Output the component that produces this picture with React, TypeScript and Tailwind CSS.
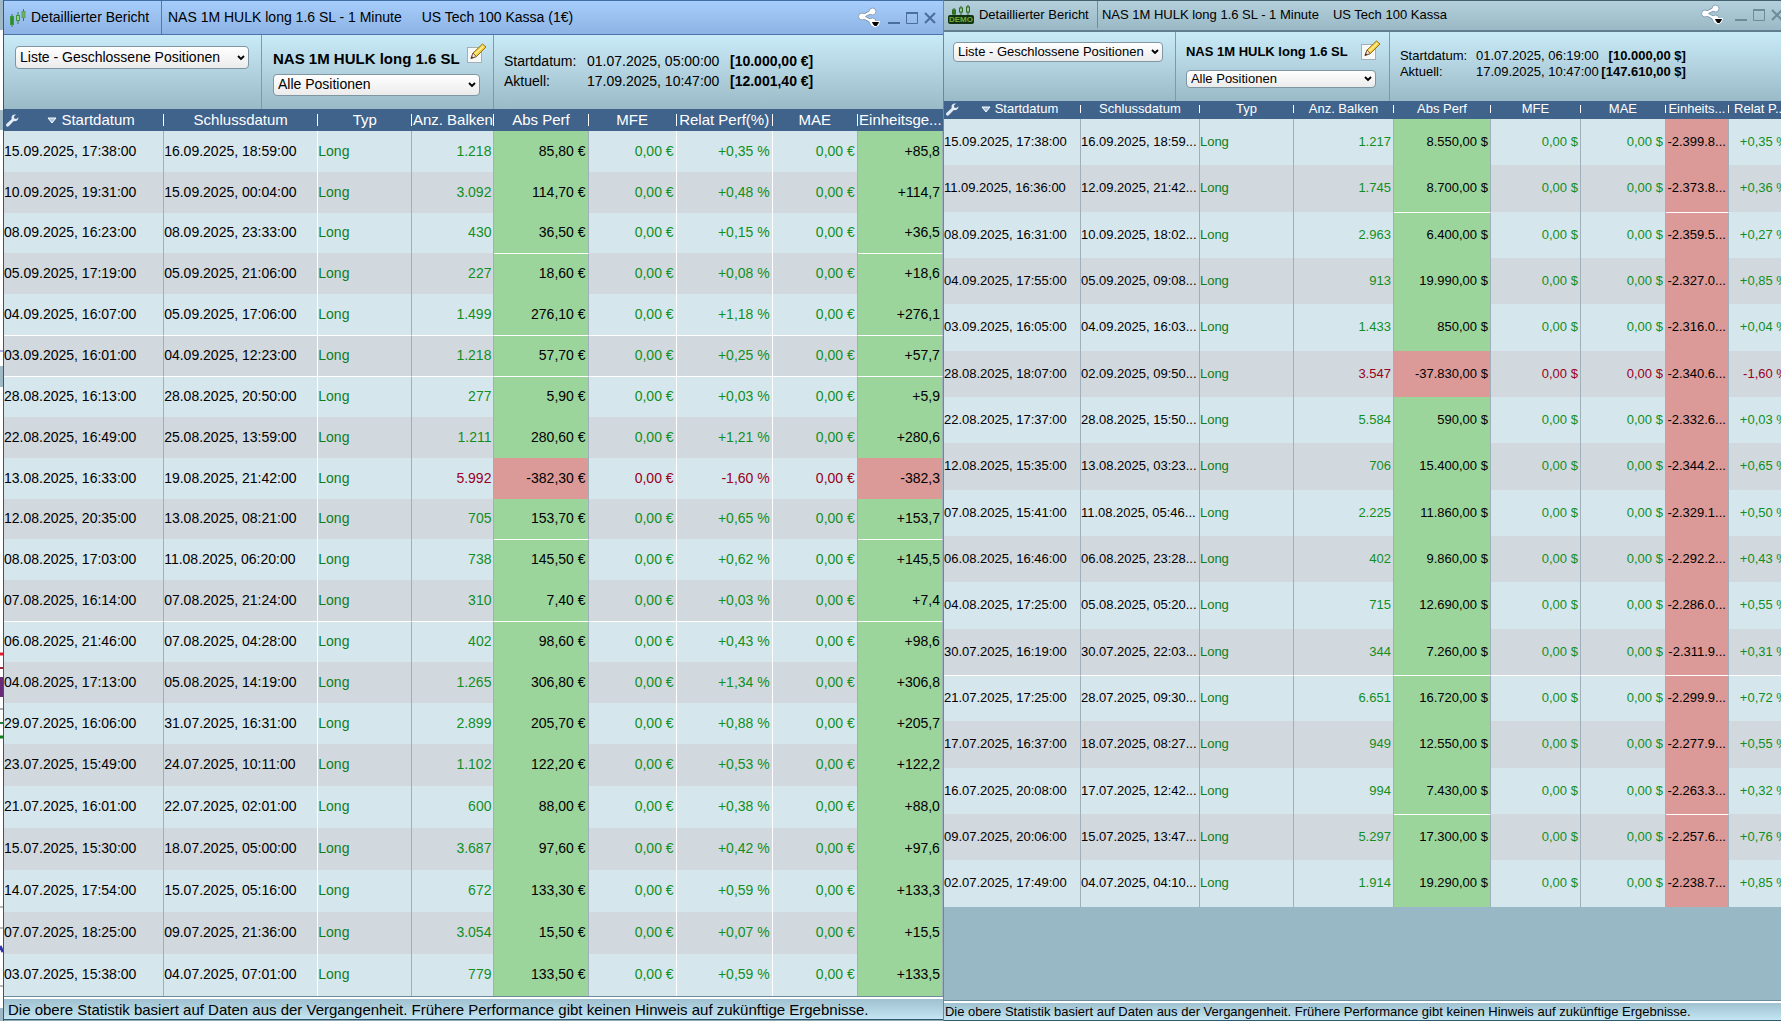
import { ReactNode } from "react";
import clsx from "clsx";

type Row = string[];

const leftRows: Row[] = [
  ["15.09.2025, 17:38:00", "16.09.2025, 18:59:00", "1.218", "85,80 €", "+0,35 %", "+85,8"],
  ["10.09.2025, 19:31:00", "15.09.2025, 00:04:00", "3.092", "114,70 €", "+0,48 %", "+114,7"],
  ["08.09.2025, 16:23:00", "08.09.2025, 23:33:00", "430", "36,50 €", "+0,15 %", "+36,5"],
  ["05.09.2025, 17:19:00", "05.09.2025, 21:06:00", "227", "18,60 €", "+0,08 %", "+18,6"],
  ["04.09.2025, 16:07:00", "05.09.2025, 17:06:00", "1.499", "276,10 €", "+1,18 %", "+276,1"],
  ["03.09.2025, 16:01:00", "04.09.2025, 12:23:00", "1.218", "57,70 €", "+0,25 %", "+57,7"],
  ["28.08.2025, 16:13:00", "28.08.2025, 20:50:00", "277", "5,90 €", "+0,03 %", "+5,9"],
  ["22.08.2025, 16:49:00", "25.08.2025, 13:59:00", "1.211", "280,60 €", "+1,21 %", "+280,6"],
  ["13.08.2025, 16:33:00", "19.08.2025, 21:42:00", "5.992", "-382,30 €", "-1,60 %", "-382,3"],
  ["12.08.2025, 20:35:00", "13.08.2025, 08:21:00", "705", "153,70 €", "+0,65 %", "+153,7"],
  ["08.08.2025, 17:03:00", "11.08.2025, 06:20:00", "738", "145,50 €", "+0,62 %", "+145,5"],
  ["07.08.2025, 16:14:00", "07.08.2025, 21:24:00", "310", "7,40 €", "+0,03 %", "+7,4"],
  ["06.08.2025, 21:46:00", "07.08.2025, 04:28:00", "402", "98,60 €", "+0,43 %", "+98,6"],
  ["04.08.2025, 17:13:00", "05.08.2025, 14:19:00", "1.265", "306,80 €", "+1,34 %", "+306,8"],
  ["29.07.2025, 16:06:00", "31.07.2025, 16:31:00", "2.899", "205,70 €", "+0,88 %", "+205,7"],
  ["23.07.2025, 15:49:00", "24.07.2025, 10:11:00", "1.102", "122,20 €", "+0,53 %", "+122,2"],
  ["21.07.2025, 16:01:00", "22.07.2025, 02:01:00", "600", "88,00 €", "+0,38 %", "+88,0"],
  ["15.07.2025, 15:30:00", "18.07.2025, 05:00:00", "3.687", "97,60 €", "+0,42 %", "+97,6"],
  ["14.07.2025, 17:54:00", "15.07.2025, 05:16:00", "672", "133,30 €", "+0,59 %", "+133,3"],
  ["07.07.2025, 18:25:00", "09.07.2025, 21:36:00", "3.054", "15,50 €", "+0,07 %", "+15,5"],
  ["03.07.2025, 15:38:00", "04.07.2025, 07:01:00", "779", "133,50 €", "+0,59 %", "+133,5"],
];

const rightRows: Row[] = [
  ["15.09.2025, 17:38:00", "16.09.2025, 18:59...", "1.217", "8.550,00 $", "+0,35 %", "-2.399.8..."],
  ["11.09.2025, 16:36:00", "12.09.2025, 21:42...", "1.745", "8.700,00 $", "+0,36 %", "-2.373.8..."],
  ["08.09.2025, 16:31:00", "10.09.2025, 18:02...", "2.963", "6.400,00 $", "+0,27 %", "-2.359.5..."],
  ["04.09.2025, 17:55:00", "05.09.2025, 09:08...", "913", "19.990,00 $", "+0,85 %", "-2.327.0..."],
  ["03.09.2025, 16:05:00", "04.09.2025, 16:03...", "1.433", "850,00 $", "+0,04 %", "-2.316.0..."],
  ["28.08.2025, 18:07:00", "02.09.2025, 09:50...", "3.547", "-37.830,00 $", "-1,60 %", "-2.340.6..."],
  ["22.08.2025, 17:37:00", "28.08.2025, 15:50...", "5.584", "590,00 $", "+0,03 %", "-2.332.6..."],
  ["12.08.2025, 15:35:00", "13.08.2025, 03:23...", "706", "15.400,00 $", "+0,65 %", "-2.344.2..."],
  ["07.08.2025, 15:41:00", "11.08.2025, 05:46...", "2.225", "11.860,00 $", "+0,50 %", "-2.329.1..."],
  ["06.08.2025, 16:46:00", "06.08.2025, 23:28...", "402", "9.860,00 $", "+0,43 %", "-2.292.2..."],
  ["04.08.2025, 17:25:00", "05.08.2025, 05:20...", "715", "12.690,00 $", "+0,55 %", "-2.286.0..."],
  ["30.07.2025, 16:19:00", "30.07.2025, 22:03...", "344", "7.260,00 $", "+0,31 %", "-2.311.9..."],
  ["21.07.2025, 17:25:00", "28.07.2025, 09:30...", "6.651", "16.720,00 $", "+0,72 %", "-2.299.9..."],
  ["17.07.2025, 16:37:00", "18.07.2025, 08:27...", "949", "12.550,00 $", "+0,55 %", "-2.277.9..."],
  ["16.07.2025, 20:08:00", "17.07.2025, 12:42...", "994", "7.430,00 $", "+0,32 %", "-2.263.3..."],
  ["09.07.2025, 20:06:00", "15.07.2025, 13:47...", "5.297", "17.300,00 $", "+0,76 %", "-2.257.6..."],
  ["02.07.2025, 17:49:00", "04.07.2025, 04:10...", "1.914", "19.290,00 $", "+0,85 %", "-2.238.7..."],
];

const footerText =
  "Die obere Statistik basiert auf Daten aus der Vergangenheit. Frühere Performance gibt keinen Hinweis auf zukünftige Ergebnisse.";

function Candles({ className }: { className?: string }) {
  return (
    <svg className={className} width="16" height="18" viewBox="0 0 16 18" aria-hidden="true">
      <path d="M2 5v13M8 3v12M13.500 0v12" stroke="#3c7d3c" />
      <rect x="0.500" y="7.500" width="3" height="8" fill="#2e8b2e" stroke="#3c9a3c" />
      <rect x="6.500" y="6.500" width="3" height="5" fill="#9fd08f" stroke="#3c9a3c" />
      <rect x="12" y="2.500" width="3" height="6" fill="#6fb565" stroke="#5a9c5a" />
    </svg>
  );
}

function DemoIcon() {
  return (
    <span className="flex w-[26px] flex-col items-center">
      <svg width="22" height="10" viewBox="0 0 22 10" aria-hidden="true">
        <path d="M4 3v7M11 1v9M18 0v10" stroke="#2c5a20" />
        <rect x="2.500" y="5" width="3" height="4" fill="#2f7d1c" stroke="#2c6a20" />
        <rect x="9.500" y="3" width="3" height="4" fill="#9fc7a0" stroke="#2c6a20" />
        <rect x="16.500" y="2" width="3" height="5" fill="#9fc7a0" stroke="#2c6a20" />
      </svg>
      <span className="flex h-[9px] w-[26px] items-center justify-center rounded-xs bg-[#123312] text-[8px] leading-none font-bold text-[#6fae3c]">
        DEMO
      </span>
    </span>
  );
}

function ShareIcon() {
  return (
    <svg width="22" height="21" viewBox="0 0 22 21" aria-hidden="true">
      <path d="M14 4.500 4 9.500l10 5" fill="none" stroke="#7d97ad" strokeWidth="4" />
      <circle cx="14.500" cy="4.500" r="3.500" fill="#fff" stroke="#8aa3b8" />
      <circle cx="4" cy="9.500" r="3.500" fill="#fff" stroke="#8aa3b8" />
      <circle cx="14.500" cy="14.500" r="3.500" fill="#fff" stroke="#8aa3b8" />
      <path d="M14 4.500 4 9.500l10 5" fill="none" stroke="#fff" strokeWidth="2" />
      <path d="M13 14h9l-1 4-4 2.500-4-2.500z" fill="#fff" />
      <path d="M14.500 15.500h6l-2 3h-2z" fill="#000" stroke="#000" />
    </svg>
  );
}

function EditIcon() {
  return (
    <svg width="20" height="21" viewBox="0 0 20 21" aria-hidden="true">
      <rect x="0.500" y="4.500" width="14" height="15" fill="#f7f8f8" stroke="#a5aeb3" />
      <path d="M4 15.500 6 10 15.500 1l3.500 3L9.500 13.500z" fill="#f4cf3a" stroke="#96701c" />
      <path d="m7 12 9.500-9" stroke="#fdf0a0" strokeWidth="1.500" />
      <path d="M4 15.500 6 10l3.500 3.500z" fill="#f3dcc0" stroke="#80604a" />
      <path d="m4 15.500.8-2.200 1.400 1.400z" fill="#222" />
    </svg>
  );
}

function Wrench() {
  return (
    <svg width="13" height="13" viewBox="0 0 13 13" aria-hidden="true">
      <path
        d="M12.500 3.200 10.300 5 8.200 4.600 7.900 2.600 10 .6C8.300 0 6.300.7 5.700 2.500c-.3.900-.2 1.700.1 2.400L.6 9.700c-.8.800-.7 1.800-.1 2.500.7.700 1.700.6 2.400-.1l4.900-5C9.700 7.700 12.400 6.700 12.500 3.200z"
        fill="#e4edf5"
      />
    </svg>
  );
}

function Dropdown({ label, option, big, className }: { label: string; option: string; big?: boolean; className: string }) {
  return (
    <div className={clsx("relative", className)}>
      <select
        aria-label={label}
        className={clsx(
          "block size-full appearance-none rounded-sm border border-[#7e97a3] bg-linear-to-b from-white to-[#ebebeb] pb-0.5 pl-1 leading-none text-black",
          big ? "text-[14px]" : "text-[13px]"
        )}
      >
        <option>{option}</option>
      </select>
      <svg className="pointer-events-none absolute top-1/2 right-1 -translate-y-1/2" width="8" height="6" viewBox="0 0 8 6" aria-hidden="true">
        <path d="m1 1 3 3 3-3" fill="none" stroke="#000" strokeWidth="1.800" />
      </svg>
    </div>
  );
}

type Column = { title: string; width: string; whiteEdge?: boolean };

function DataTable({
  columns,
  rows,
  cells,
  big,
}: {
  columns: Column[];
  rows: Row[];
  cells: (row: Row) => string[];
  big?: boolean;
}) {
  const tinted = (title: string) => title === "Abs Perf" || title.startsWith("Einheits");

  const rowHeight = (i: number) => {
    if (!big) return i % 3 === 1 ? "h-[47px]" : "h-[46px]";
    if (i >= 15) return "h-[42px]";
    return i % 7 === 2 ? "h-[40px]" : "h-[41px]";
  };

  // white rules above some rows, either across the table or only in the tinted columns
  const fullRules = big ? [5, 6, 12] : [12];
  const tintedRules = big ? [3, 10] : [2, 15];

  return (
    <table className="w-full table-fixed border-separate border-spacing-0">
      <colgroup>
        {columns.map((c) => (
          <col key={c.title} className={c.width} />
        ))}
      </colgroup>
      <thead>
        <tr className={clsx("bg-[#40638c] text-white", big ? "h-[22px] text-[15px]" : "h-[18px] text-[13px]")}>
          {columns.map((c, i) => (
            <th key={c.title} className={clsx("overflow-hidden p-0 leading-4 font-normal whitespace-nowrap", !big && "pb-0.5")}>
              <div className="flex items-center">
                {i === 0 && (
                  <button aria-label="Spalten" className="pl-0.5">
                    <Wrench />
                  </button>
                )}
                <span className="flex flex-1 items-center justify-center gap-1">
                  {i === 0 && (
                    <svg width="10" height="7" viewBox="0 0 10 7" aria-hidden="true">
                      <path d="M1 1h8L5 6z" fill="#a9c4dc" stroke="#fff" />
                    </svg>
                  )}
                  {c.title}
                </span>
                {i < columns.length - 1 && <span className={clsx("w-px shrink-0 bg-white", big ? "h-3" : "h-2")} />}
              </div>
            </th>
          ))}
        </tr>
      </thead>
      <tbody className={clsx("leading-4", big ? "text-[14px]" : "text-[13px]")}>
        {rows.map((row, i) => {
          const loss = row[3].startsWith("-");
          return (
            <tr key={row[0]} className={clsx(rowHeight(i), i % 2 ? "bg-[#d1d8de]" : "bg-[#d6e6ed]")}>
              {cells(row).map((value, j) => {
                const col = columns[j];
                const tint = tinted(col.title);
                return (
                  <td
                    key={col.title}
                    className={clsx(
                      "overflow-hidden border-r p-0 whitespace-nowrap",
                      big ? "pb-0.5" : "pb-px",
                      col.whiteEdge ? "border-r-white" : "border-r-[#9fb0ba]",
                      j < 3 ? "text-left" : "pr-0.5 text-right",
                      tint && (value.startsWith("-") ? "bg-[#db9a98]" : "bg-[#9cd59c]"),
                      j < 2 || tint ? "text-black" : j === 2 ? "text-[#0f7d1c]" : loss ? "text-[#98001c]" : "text-[#118f1e]",
                      (fullRules.includes(i) || (tint && tintedRules.includes(i))) && "border-t border-t-white"
                    )}
                  >
                    {value}
                  </td>
                );
              })}
            </tr>
          );
        })}
      </tbody>
    </table>
  );
}

function WindowButtons({ big }: { big?: boolean }) {
  const stroke = big ? "#4a6f9c" : "#6f8b98";
  return (
    <div className="flex items-center gap-[6px]">
      <button aria-label="Teilen" className={big ? "mr-0.5" : "mr-1.5"}>
        <ShareIcon />
      </button>
      <button aria-label="Minimieren">
        <svg width="12" height="12" viewBox="0 0 12 12" aria-hidden="true">
          <path d="M0 11h12" stroke={stroke} strokeWidth="2" />
        </svg>
      </button>
      <button aria-label="Maximieren">
        <svg width="12" height="12" viewBox="0 0 12 12" aria-hidden="true">
          <path d="M.5 1v10.500h11V1" fill="none" stroke={stroke} />
          <path d="M0 1h12" stroke={stroke} strokeWidth="2" />
        </svg>
      </button>
      <button aria-label="Schließen">
        <svg width="12" height="12" viewBox="0 0 12 12" aria-hidden="true">
          <path d="m1 1 10 10M11 1 1 11" stroke={stroke} strokeWidth="2" />
        </svg>
      </button>
    </div>
  );
}

function Footer({ big }: { big?: boolean }) {
  return (
    <footer
      className={clsx(
        "mt-auto overflow-hidden border-t border-b border-t-[#6e8b9a] border-b-[#2f5a70] bg-linear-to-b from-[#9bbdcc] to-[#c4e5f2] whitespace-nowrap text-black shadow-[inset_0_2px_0_#fff]",
        big ? "h-6 pt-[3px] pl-1 text-[15px] leading-5" : "h-[21px] pt-[3px] pl-px text-[13px] leading-4"
      )}
    >
      {footerText}
    </footer>
  );
}

function LeftReport() {
  const columns: Column[] = [
    { title: "Startdatum", width: "w-[160px]" },
    { title: "Schlussdatum", width: "w-[154px]", whiteEdge: true },
    { title: "Typ", width: "w-[94px]" },
    { title: "Anz. Balken", width: "w-[82px]" },
    { title: "Abs Perf", width: "w-[94px]" },
    { title: "MFE", width: "w-[88px]", whiteEdge: true },
    { title: "Relat Perf(%)", width: "w-[96px]", whiteEdge: true },
    { title: "MAE", width: "w-[85px]" },
    { title: "Einheitsge...", width: "w-[85px]" },
  ];
  return (
    <section className="flex min-w-0 flex-1 flex-col border border-t-[#3f6ea5] border-r-[#5a8fa5] border-b-0 border-l-[#38586c] bg-[#99b8c6]">
      <header className="flex h-[34px] items-center border-b border-[#4d74a5] bg-linear-to-b from-[#a6cdfb] to-[#8db3e4] pr-[7px] text-[14px] whitespace-nowrap">
        <div className="flex h-full w-[158px] shrink-0 items-center gap-[5px] border-r border-[#5578a5] pl-1.5">
          <Candles />
          Detaillierter Bericht
        </div>
        <h1 className="flex flex-1 gap-5 pl-1.5">
          <span>NAS 1M HULK long 1.6 SL - 1 Minute</span>
          <span>US Tech 100 Kassa (1€)</span>
        </h1>
        <WindowButtons big />
      </header>
      <div className="flex h-[74px] bg-linear-to-b from-[#c9ebf7] to-[#9bbac7] whitespace-nowrap">
        <div className="w-[258px] shrink-0 border-r border-[#7e9aa6] pt-[11px] pl-[11px]">
          <Dropdown big label="Ansicht" option="Liste - Geschlossene Positionen" className="h-[23px] w-[234px]" />
        </div>
        <div className="w-[232px] shrink-0 border-r border-[#7e9aa6] pt-2 pl-[11px]">
          <div className="flex h-[31px] items-start justify-between pr-[6px] text-[15px] font-bold">
            <span className="pt-1.5 leading-5">NAS 1M HULK long 1.6 SL</span>
            <button aria-label="Bearbeiten">
              <EditIcon />
            </button>
          </div>
          <Dropdown big label="Filter" option="Alle Positionen" className="h-[22px] w-[207px]" />
        </div>
        <dl className="grid auto-rows-min grid-cols-[83px_143px_auto] pt-4 pl-2.5 text-[14px] leading-5">
          <dt>Startdatum:</dt>
          <dd>01.07.2025, 05:00:00</dd>
          <dd className="font-bold">[10.000,00 €]</dd>
          <dt>Aktuell:</dt>
          <dd>17.09.2025, 10:47:00</dd>
          <dd className="font-bold">[12.001,40 €]</dd>
        </dl>
      </div>
      <DataTable
        big
        columns={columns}
        rows={leftRows}
        cells={([start, end, bars, perf, rel, gain]) => [start, end, "Long", bars, perf, "0,00 €", rel, "0,00 €", gain]}
      />
      <Footer big />
      <div className="h-px bg-[#8fa9b5]" />
    </section>
  );
}

function RightReport() {
  const columns: Column[] = [
    { title: "Startdatum", width: "w-[137px]" },
    { title: "Schlussdatum", width: "w-[119px]" },
    { title: "Typ", width: "w-[94px]" },
    { title: "Anz. Balken", width: "w-[100px]" },
    { title: "Abs Perf", width: "w-[97px]" },
    { title: "MFE", width: "w-[90px]" },
    { title: "MAE", width: "w-[85px]" },
    { title: "Einheits...", width: "w-[63px]" },
    { title: "Relat P...", width: "w-[62px]" },
  ];
  return (
    <section className="flex w-[847px] shrink-0 flex-col border-t border-[#44606e] bg-[#99b8c6]">
      <header className="flex h-[31px] items-center border-b-2 border-[#5f7f8e] bg-linear-to-b from-[#b3d0dc] to-[#9ab8c5] pr-2 pb-0.5 text-[13px] whitespace-nowrap">
        <div className="flex h-full w-[154px] shrink-0 items-center gap-[5px] border-r border-[#6f8b98] pl-1">
          <DemoIcon />
          Detaillierter Bericht
        </div>
        <h1 className="flex flex-1 gap-3.5 pl-1">
          <span>NAS 1M HULK long 1.6 SL - 1 Minute</span>
          <span>US Tech 100 Kassa</span>
        </h1>
        <WindowButtons />
      </header>
      <div className="flex h-[69px] bg-linear-to-b from-[#c9ebf7] to-[#9bbac7] whitespace-nowrap">
        <div className="w-[232px] shrink-0 border-r border-[#7e9aa6] pt-[10px] pl-[9px]">
          <Dropdown label="Ansicht" option="Liste - Geschlossene Positionen" className="h-5 w-[210px]" />
        </div>
        <div className="w-[214px] shrink-0 border-r border-[#7e9aa6] pt-2 pl-[10px]">
          <div className="flex h-[30px] items-start justify-between pr-2 text-[13px] font-bold">
            <span className="pt-1 leading-4">NAS 1M HULK long 1.6 SL</span>
            <button aria-label="Bearbeiten">
              <EditIcon />
            </button>
          </div>
          <Dropdown label="Filter" option="Alle Positionen" className="h-[18px] w-[190px]" />
        </div>
        <dl className="grid auto-rows-min grid-cols-[76px_120px_90px] pt-4 pl-[10px] text-[13px] leading-4">
          <dt>Startdatum:</dt>
          <dd>01.07.2025, 06:19:00</dd>
          <dd className="text-right font-bold">[10.000,00 $]</dd>
          <dt>Aktuell:</dt>
          <dd>17.09.2025, 10:47:00</dd>
          <dd className="text-right font-bold">[147.610,00 $]</dd>
        </dl>
      </div>
      <DataTable
        columns={columns}
        rows={rightRows}
        cells={([start, end, bars, perf, rel, gain]) => [start, end, "Long", bars, perf, "0,00 $", "0,00 $", gain, rel]}
      />
      <Footer />
    </section>
  );
}

// sliver of the chart window that shows behind the left report
function ChartEdge(): ReactNode {
  return (
    <svg className="w-[3px] shrink-0 bg-white" viewBox="0 0 3 1021" preserveAspectRatio="xMinYMin slice" aria-hidden="true">
      <path d="M0 0h3v30H0zM0 110h3v20H0zM0 366h3v21H0zM0 1008h3v13H0z" fill="#9fb9c6" />
      <path d="M0 351h3" stroke="#5a5ac8" />
      <path d="M0 654h3" stroke="#e02030" strokeWidth="3" />
      <path d="M0 668h3" stroke="#a02838" strokeWidth="2" />
      <path d="M0 677h3v20H0z" fill="#6a2a7a" />
      <path d="M0 709h3" stroke="#556" />
      <path d="M0 723h3" stroke="#2a7a3a" strokeWidth="2" />
      <path d="M0 737h3" stroke="#0f7d1c" strokeWidth="3" />
      <path d="M0 907h3M0 928h3M0 986h3" stroke="#777" />
      <path d="m0 946 3 6" stroke="#33a" strokeWidth="3" />
    </svg>
  );
}

export default function App() {
  return (
    <div className="flex min-h-screen overflow-hidden bg-white font-['Liberation_Sans',Arial,sans-serif] text-black">
      <div className="flex w-[53%] shrink-0">
        <ChartEdge />
        <LeftReport />
      </div>
      <RightReport />
    </div>
  );
}
